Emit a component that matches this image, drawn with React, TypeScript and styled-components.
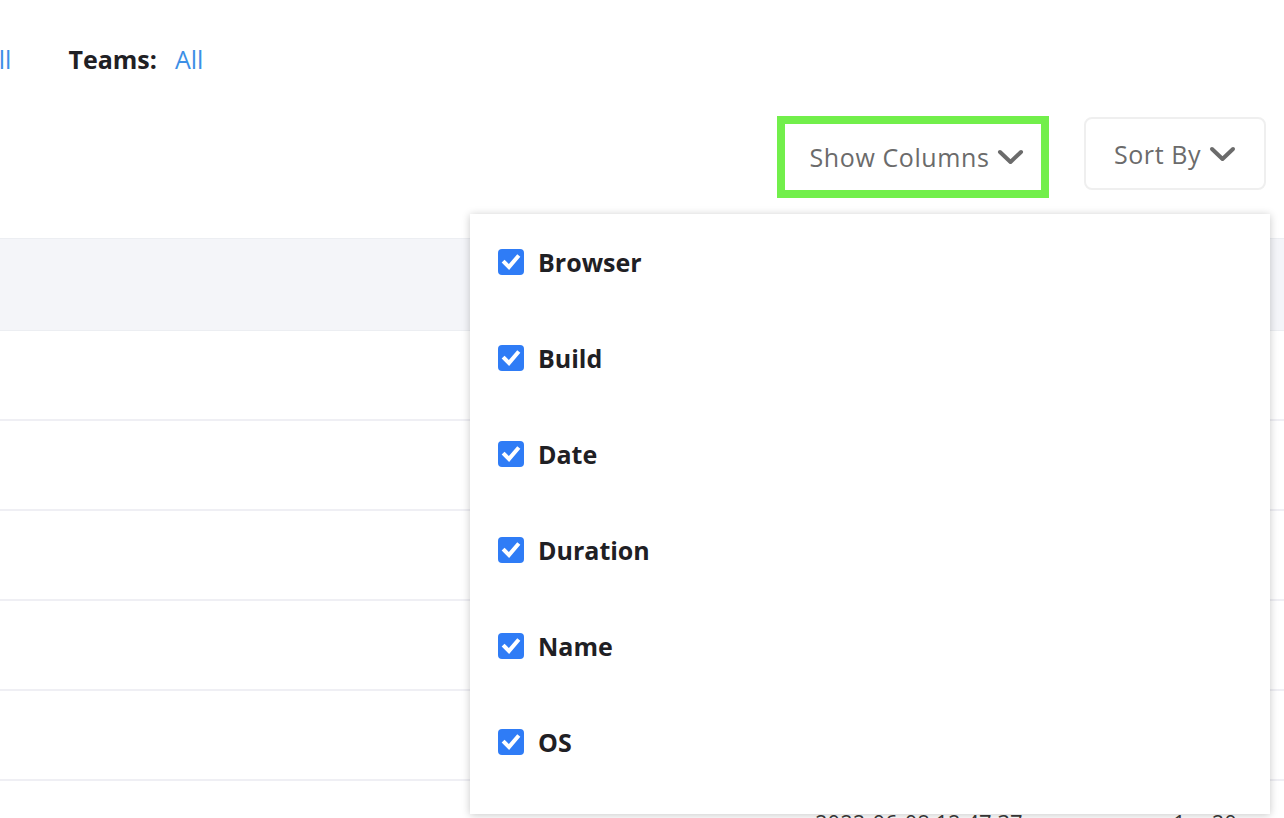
import React from 'react';
import styled, { createGlobalStyle } from 'styled-components';

const GlobalStyle = createGlobalStyle`
  html, body {
    margin: 0;
    padding: 0;
    background: #ffffff;
  }
  body {
    font-family: 'Open Sans', 'Lato', sans-serif;
    color: #1f2024;
  }
`;

const Page = styled.div`
  position: relative;
  width: 1284px;
  height: 818px;
  overflow: hidden;
  background: #ffffff;
`;

const FilterBar = styled.div`
  display: flex;
  align-items: center;
  height: 60px;
  padding-top: 29px;
  margin-left: -17px;
  font-size: 25px;
`;

const FilterGroup = styled.div`
  display: flex;
  align-items: center;
  gap: 18px;
  margin-right: 57px;
`;

const FilterLabel = styled.span`
  font-weight: 700;
  color: #1f2024;
`;

const FilterValue = styled.span`
  color: #3d8fe6;
`;

const Toolbar = styled.div`
  display: flex;
  justify-content: flex-end;
  align-items: flex-start;
  gap: 35px;
  padding: 28px 18px 0 0;
  height: 149px;
  box-sizing: border-box;
`;

const DropButton = styled.button<{ $highlight?: boolean }>`
  display: flex;
  align-items: center;
  justify-content: center;
  gap: 8px;
  box-sizing: border-box;
  height: ${(p) => (p.$highlight ? '82px' : '73px')};
  width: ${(p) => (p.$highlight ? '272px' : '182px')};
  margin-top: ${(p) => (p.$highlight ? '-1px' : '0')};
  padding: ${(p) => (p.$highlight ? '0 0 0 8px' : '0')};
  border: ${(p) => (p.$highlight ? '8px solid #72ef4b' : '2px solid #efefef')};
  border-radius: ${(p) => (p.$highlight ? '0' : '8px')};
  background: #ffffff;
  font-family: 'Open Sans', 'Lato', sans-serif;
  font-size: 25px;
  letter-spacing: 0.6px;
  color: #6b6b6b;
  cursor: pointer;
`;

const Chevron = () => (
  <svg width="27" height="16" viewBox="0 0 27 16" fill="none">
    <path d="M3 3 L13.5 13 L24 3" stroke="#6b6b6b" strokeWidth="4" strokeLinecap="round" strokeLinejoin="round" />
  </svg>
);

const Table = styled.div`
  display: flex;
  flex-direction: column;
`;

const HeaderRow = styled.div`
  height: 93px;
  box-sizing: border-box;
  background: #f4f5f9;
  border-top: 1px solid #eceef2;
  border-bottom: 1px solid #eceef2;
`;

const Row = styled.div`
  display: flex;
  height: 90px;
  box-sizing: border-box;
  border-bottom: 2px solid #efeff4;
  padding-top: 26px;
  font-size: 22px;
  color: #3a3a3a;
`;

const Cell = styled.div<{ $width: number }>`
  width: ${(p) => p.$width}px;
  flex-shrink: 0;
`;

const Menu = styled.div`
  position: absolute;
  left: 470px;
  top: 214px;
  width: 800px;
  height: 600px;
  box-sizing: border-box;
  background: #ffffff;
  box-shadow: 0 1px 8px rgba(0, 0, 0, 0.22);
  display: flex;
  flex-direction: column;
`;

const MenuItem = styled.label`
  display: flex;
  align-items: center;
  height: 96px;
  padding-left: 28px;
  gap: 14px;
  font-size: 25px;
  font-weight: 700;
  color: #1f2024;
  cursor: pointer;
`;

const CheckBox = styled.span`
  display: flex;
  align-items: center;
  justify-content: center;
  width: 26px;
  height: 26px;
  border-radius: 4px;
  background: #2f7cf6;
`;

const Check = () => (
  <CheckBox>
    <svg width="20" height="20" viewBox="0 0 20 20" fill="none">
      <path d="M3.5 10.5 L8 15 L16.5 5" stroke="#ffffff" strokeWidth="4" strokeLinecap="square" strokeLinejoin="miter" />
    </svg>
  </CheckBox>
);

const columns = ['Browser', 'Build', 'Date', 'Duration', 'Name', 'OS'];

const App: React.FC = () => {
  return (
    <Page>
      <GlobalStyle />
      <FilterBar>
        <FilterGroup>
          <FilterValue>All</FilterValue>
        </FilterGroup>
        <FilterGroup>
          <FilterLabel>Teams:</FilterLabel>
          <FilterValue>All</FilterValue>
        </FilterGroup>
      </FilterBar>

      <Toolbar>
        <DropButton $highlight>
          Show Columns <Chevron />
        </DropButton>
        <DropButton>
          Sort By <Chevron />
        </DropButton>
      </Toolbar>

      <Table>
        <HeaderRow />
        <Row />
        <Row />
        <Row />
        <Row />
        <Row />
        <Row>
          <Cell $width={815} />
          <Cell $width={358}>2022-06-08 12:47:37</Cell>
          <Cell $width={120}>1m 20s</Cell>
        </Row>
      </Table>

      <Menu>
        {columns.map((c) => (
          <MenuItem key={c}>
            <Check />
            {c}
          </MenuItem>
        ))}
      </Menu>
    </Page>
  );
};

export default App;
